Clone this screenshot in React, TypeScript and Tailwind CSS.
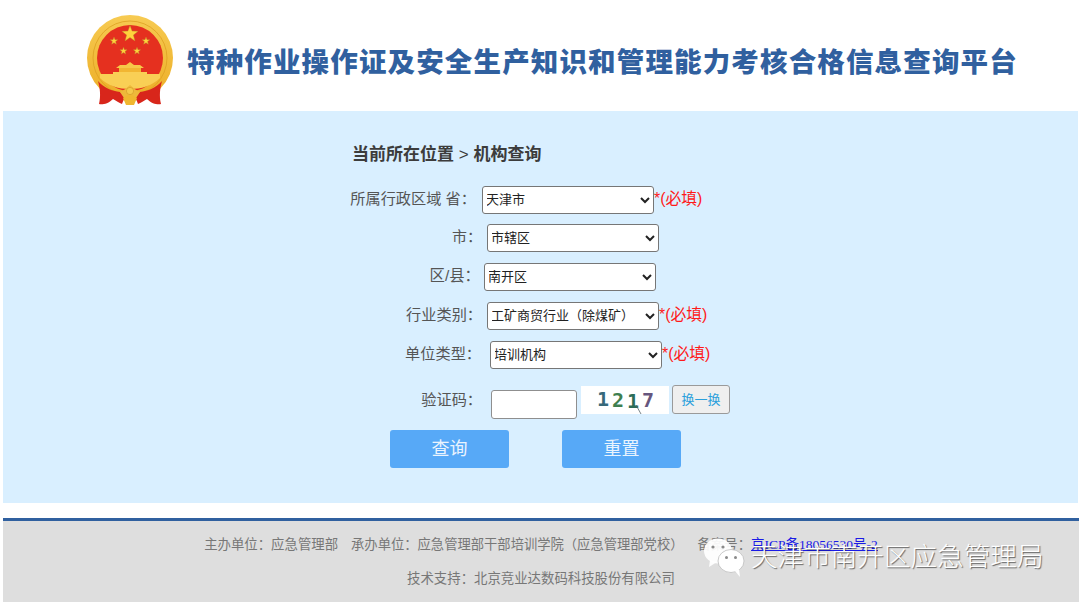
import React from "react";

const cjk = "font-['Liberation_Sans','Noto_Sans_CJK_SC',sans-serif]";

function Star({ x, y, r, fill = "#ffd23c" }: { x: number; y: number; r: number; fill?: string }) {
  const pts: string[] = [];
  for (let i = 0; i < 10; i++) {
    const a = -Math.PI / 2 + (i * Math.PI) / 5;
    const q = i % 2 === 0 ? r : r * 0.42;
    pts.push(`${x + q * Math.cos(a)},${y + q * Math.sin(a)}`);
  }
  return <polygon points={pts.join(" ")} fill={fill} stroke="#b8862a" strokeWidth="0.4" />;
}

function Emblem() {
  return (
    <svg viewBox="87 15 86 91" width="86" height="91" className="block shrink-0">
      <defs>
        <linearGradient id="gold" x1="0" y1="0" x2="0" y2="1">
          <stop offset="0" stopColor="#f7cb52" />
          <stop offset="1" stopColor="#ecad26" />
        </linearGradient>
      </defs>
      <circle cx="130" cy="58" r="43" fill="url(#gold)" />
      <circle cx="130" cy="58" r="37" fill="none" stroke="#dd9f22" strokeWidth="0.8" />
      <circle cx="130" cy="58" r="33" fill="#e5301f" />
      <Star x={130} y={34} r={8.5} />
      <Star x={114} y={41} r={4} />
      <Star x={146} y={41} r={4} />
      <Star x={123.5} y={51} r={3.8} />
      <Star x={137} y={51} r={3.8} />
      <path d="M116 68 L120 65 L126 65 L130 62 L134 65 L140 65 L144 68 Z" fill="#f7c948" />
      <rect x="119" y="68" width="22" height="4" fill="#f2b632" />
      <path d="M113 72 H147 V74 H160 V78 C152 86 141 89 130 89 C119 89 108 86 100 78 V74 H113 Z" fill="#f9cf55" />
      <path d="M98 81 C104 88 112 91 120 92 L125 96 L122 104 C118 102 116 101 113 99 C108 104 102 105 99 104 C101 96 100 88 98 81 Z" fill="#d8261b" />
      <path d="M162 81 C156 88 148 91 140 92 L135 96 L138 104 C142 102 144 101 147 99 C152 104 158 105 161 104 C159 96 160 88 162 81 Z" fill="#d8261b" />
      <path d="M120 92 C124 90 127 88 130 85 C133 88 136 90 140 92 L136 98 L124 98 Z" fill="#eeb93a" />
      <path d="M123 98 L130 94 L137 98 L134 105 L126 105 Z" fill="#f0b72f" />
      <circle cx="130" cy="91" r="3.6" fill="#f5ca4a" stroke="#c98e1e" strokeWidth="0.5" />
    </svg>
  );
}

function Required() {
  return <span className="pb-[2px] text-[15.8px] text-[#ff1a1a] whitespace-nowrap">*(必填)</span>;
}

const selectCls =
  "w-[172px] h-[28px] shrink-0 bg-white border border-[#767676] rounded-[3px] text-[13px] text-[#222] pl-0 pb-[2px] [text-indent:-1px]";

function WeChat() {
  return (
    <svg viewBox="0 0 44 42" width="44" height="42" className="block">
      <ellipse cx="16" cy="15" rx="14" ry="12.5" fill="#fff" fillOpacity="0.92" />
      <path d="M8 24 L7 31 L15 26 Z" fill="#fff" fillOpacity="0.92" />
      <circle cx="11" cy="11" r="1.6" fill="#8a8a8a" />
      <circle cx="21" cy="11" r="1.6" fill="#8a8a8a" />
      <ellipse cx="29" cy="25" rx="13" ry="11.5" fill="#fff" stroke="#bdbdbd" strokeWidth="0.8" />
      <path d="M33 35 L38 41 L37 33 Z" fill="#fff" />
      <circle cx="24.5" cy="21.5" r="1.5" fill="#8a8a8a" />
      <circle cx="33.5" cy="21.5" r="1.5" fill="#8a8a8a" />
    </svg>
  );
}

export default function App() {
  return (
    <div className={`relative w-[1080px] h-[605px] overflow-hidden bg-white ${cjk}`}>
      <header className="h-[111px] flex items-start pl-[87px] pt-[15px]">
        <Emblem />
        <h1 className="ml-[14px] mt-[32px] text-[27.5px] leading-[32px] font-black tracking-[1.15px] text-[#30609f] whitespace-nowrap">
          特种作业操作证及安全生产知识和管理能力考核合格信息查询平台
        </h1>
      </header>

      <main className="ml-[3px] mr-[2px] h-[392px] bg-[#d9efff] pt-[32px]">
        <div className="ml-[349px] h-[24px] leading-[24px] text-[17px] font-bold text-[#3c3c3c]">
          当前所在位置 <span className="font-normal">&gt;</span> 机构查询
        </div>

        <div className="mt-[19px] flex items-center h-[28px]">
          <label className="w-[479px] pr-[6px] pb-[2px] text-right text-[15.2px] text-[#555]">所属行政区域 省：</label>
          <select className={selectCls} defaultValue="天津市">
            <option>天津市</option>
          </select>
          <Required />
        </div>
        <div className="mt-[10px] flex items-center h-[28px]">
          <label className="w-[484px] pr-[5px] pb-[2px] text-right text-[15px] text-[#555]">市：</label>
          <select className={selectCls} defaultValue="市辖区">
            <option>市辖区</option>
          </select>
        </div>
        <div className="mt-[11px] flex items-center h-[28px]">
          <label className="w-[481px] pr-[4px] pb-[2px] text-right text-[15.4px] text-[#555]">区/县：</label>
          <select className={selectCls} defaultValue="南开区">
            <option>南开区</option>
          </select>
        </div>
        <div className="mt-[11px] flex items-center h-[28px]">
          <label className="w-[484px] pr-[5px] pb-[2px] text-right text-[15.2px] text-[#555]">行业类别：</label>
          <select className={selectCls} defaultValue="工矿商贸行业（除煤矿）">
            <option>工矿商贸行业（除煤矿）</option>
          </select>
          <Required />
        </div>
        <div className="mt-[11px] flex items-center h-[28px]">
          <label className="w-[487px] pr-[9px] pb-[2px] text-right text-[15.2px] text-[#555]">单位类型：</label>
          <select className={selectCls} defaultValue="培训机构">
            <option>培训机构</option>
          </select>
          <Required />
        </div>

        <div className="mt-[16px] flex items-start h-[34px]">
          <label className="w-[488px] pr-[9px] mt-[4px] text-right text-[15.2px] text-[#555]">验证码：</label>
          <input className="mt-[5px] w-[86px] h-[29px] bg-white border border-[#8f8f8f] rounded-[3px]" />
          <div className="relative ml-[4px] mt-[1px] w-[88px] h-[28px] bg-white flex items-start justify-center gap-[3px] pl-[1px] text-[20px] leading-[26px] font-bold font-['DejaVu_Sans_Mono',monospace]">
            <span className="w-[12px] text-center text-[#37697a]">1</span>
            <span className="w-[12px] mt-[1px] text-center text-[#3f7f50]">2</span>
            <span className="w-[12px] mt-[2px] text-center text-[#2c6d58]">1</span>
            <span className="w-[12px] mt-[1px] text-center text-[#66567e]">7</span>
            <svg viewBox="0 0 88 28" width="88" height="28" className="absolute left-0 top-0">
              <path d="M55 19 L60 28" stroke="#55656a" strokeWidth="0.8" fill="none" />
            </svg>
          </div>
          <button className="ml-[3px] w-[58px] h-[29px] bg-[#efefef] border border-[#9a9a9a] rounded-[3px] text-[13px] text-[#2b9fdc]">
            换一换
          </button>
        </div>

        <div className="mt-[11px] ml-[387px] flex gap-[53px]">
          <button className="w-[119px] h-[38px] pt-[1px] bg-[#57a9f7] rounded-[3px] text-[18px] text-[#eaf4fe]">查询</button>
          <button className="w-[119px] h-[38px] pt-[1px] bg-[#57a9f7] rounded-[3px] text-[18px] text-[#eaf4fe]">重置</button>
        </div>
      </main>

      <footer className="mt-[15px] ml-[3px] mr-[1px] h-[84px] border-t-[3px] border-[#30609f] bg-[#dedede] text-center text-[13.4px] text-[#777]">
        <p className="pt-[14px] leading-[20px] whitespace-nowrap">
          <span>主办单位：应急管理部</span>
          <span className="ml-[13px] text-[13.3px]">承办单位：应急管理部干部培训学院（应急管理部党校）</span>
          <span className="ml-[14px]">备案号：</span>
          <a className="text-[13.5px] text-[#1a1ae6] underline font-['Liberation_Serif','Noto_Sans_CJK_SC',serif]" href="#">
            京ICP备18056530号-2
          </a>
        </p>
        <p className="mt-[14px] leading-[20px]">技术支持：北京竞业达数码科技股份有限公司</p>
      </footer>

      <div className="absolute left-[702px] top-[536px] flex items-center gap-[5px]">
        <WeChat />
        <span className="text-[26.6px] leading-[32px] font-light text-white whitespace-nowrap [text-shadow:1px_1px_1px_rgba(0,0,0,0.55)]">
          天津市南开区应急管理局
        </span>
      </div>
    </div>
  );
}
